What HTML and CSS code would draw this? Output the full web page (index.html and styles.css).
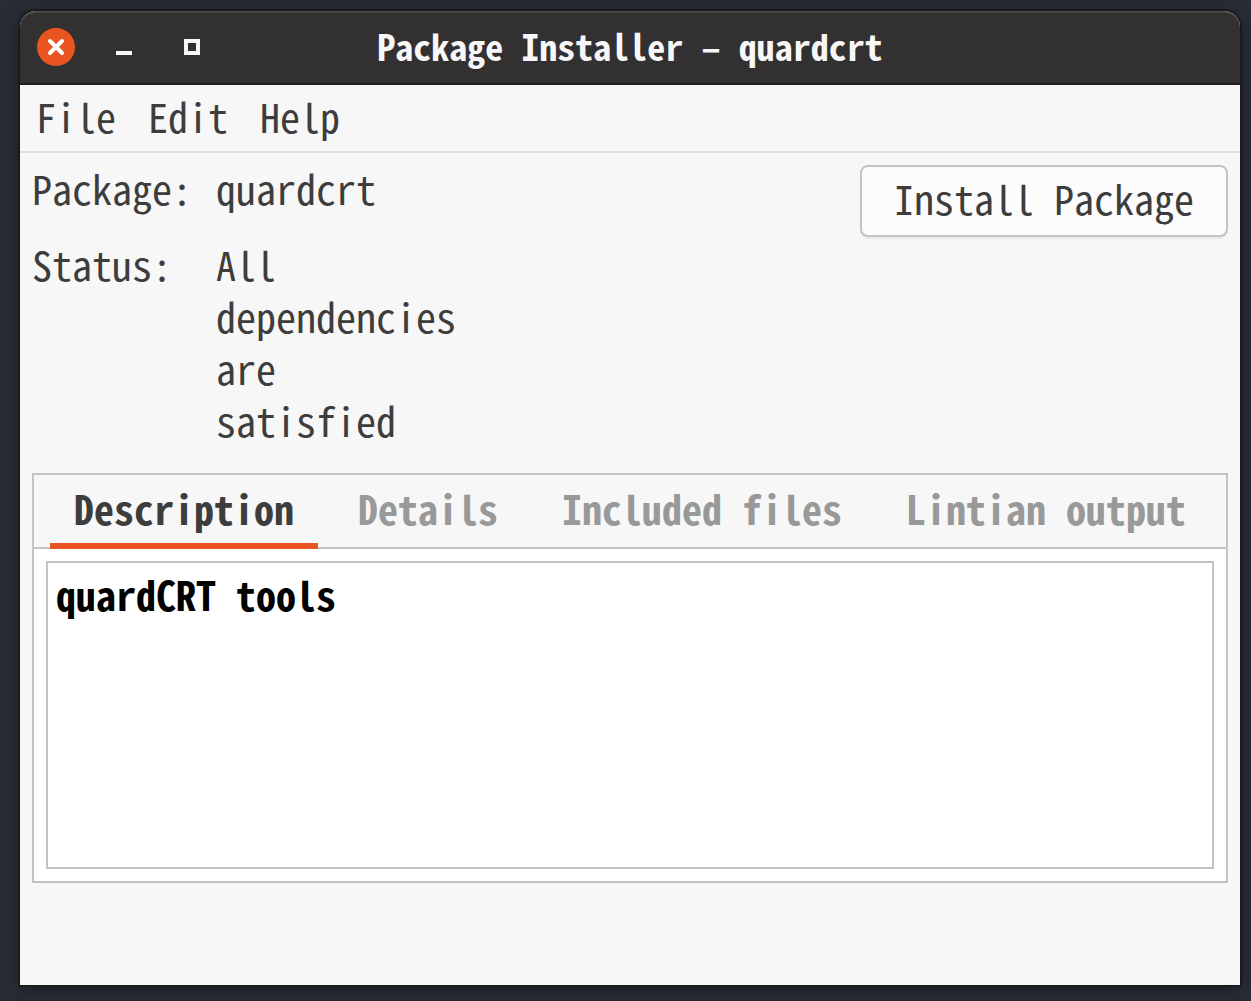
FILE: index.html
```html
<!DOCTYPE html>
<html lang="en">
<head>
<meta charset="utf-8">
<title>Package Installer – quardcrt</title>
<link rel="stylesheet" href="styles.css">
</head>
<body>
<div class="window">
  <header class="titlebar">
    <div class="controls">
      <button class="control" type="button" aria-label="Close">
        <svg viewBox="0 0 38 38" width="38" height="38"><circle cx="19" cy="19" r="19" fill="#e95420"/><path d="M13 13L25 25M25 13L13 25" stroke="#fff" stroke-width="4" stroke-linecap="round"/></svg>
      </button>
      <button class="control" type="button" aria-label="Minimize">
        <svg viewBox="0 0 38 38" width="38" height="38"><path d="M11 23h16v4H11z" fill="#f7f7f7"/></svg>
      </button>
      <button class="control" type="button" aria-label="Maximize">
        <svg viewBox="0 0 38 38" width="38" height="38"><path d="M13 13h12v12H13z" fill="none" stroke="#f7f7f7" stroke-width="4"/></svg>
      </button>
    </div>
    <h1 class="title">Package Installer – quardcrt</h1>
  </header>
  <nav class="menubar">
    <button class="menu" type="button">File</button>
    <button class="menu" type="button">Edit</button>
    <button class="menu" type="button">Help</button>
  </nav>
  <main class="content">
    <section class="summary">
      <dl class="info">
        <dt>Package:</dt>
        <dd>quardcrt</dd>
        <dt>Status:</dt>
        <dd>All dependencies are satisfied</dd>
      </dl>
      <button class="install" type="button">Install Package</button>
    </section>
    <section class="notebook">
      <div class="tabs" role="tablist">
        <button class="tab active" type="button" role="tab" aria-selected="true">Description</button>
        <button class="tab" type="button" role="tab" aria-selected="false">Details</button>
        <button class="tab" type="button" role="tab" aria-selected="false">Included files</button>
        <button class="tab" type="button" role="tab" aria-selected="false">Lintian output</button>
      </div>
      <div class="page" role="tabpanel">
        <textarea class="description" aria-label="Description" readonly>quardCRT tools</textarea>
      </div>
    </section>
  </main>
</div>
</body>
</html>
```
FILE: styles.css
```css
* {
  box-sizing: border-box;
}

body {
  margin: 0;
  min-height: 100vh;
  padding: 11px 11px 16px 20px;
  display: flex;
  background: #282c35;
  color: #3d3d3d;
  font: 40px/52px "Noto Sans Mono CJK SC", "Liberation Mono", monospace;
}

button,
textarea {
  margin: 0;
  padding: 0;
  border: 0;
  background: none;
  color: inherit;
  font: inherit;
}

.window {
  flex: 1;
  display: flex;
  flex-direction: column;
  border-radius: 16px 16px 0 0;
  background: #f7f7f7;
  box-shadow: 0 0 0 2px #1a1b1f, 0 4px 20px rgba(0, 0, 0, 0.4);
}

.titlebar {
  display: grid;
  grid-template-columns: 1fr auto 1fr;
  align-items: center;
  height: 74px;
  padding: 0 17px;
  border-top: 2px solid #484644;
  border-bottom: 2px solid #231f20;
  border-radius: 16px 16px 0 0;
  background: #333031;
  color: #f7f7f7;
}

.controls {
  display: flex;
  gap: 30px;
  padding-bottom: 2px;
}

.control,
.control svg {
  display: block;
}

.title {
  margin: 0;
  padding-bottom: 6px;
  font-size: 36px;
  font-weight: 700;
}

.menubar {
  display: flex;
  gap: 32px;
  padding: 5px 16px 9px;
  border-bottom: 2px solid #dedede;
}

.content {
  display: flex;
  flex-direction: column;
  padding: 9px 12px 12px;
}

.summary {
  display: flex;
  justify-content: space-between;
  align-items: flex-start;
}

.info {
  display: grid;
  grid-template-columns: auto 250px;
  gap: 24px;
  margin: 0 0 27px;
}

.info dd {
  margin: 0;
}

.install {
  margin-top: 3px;
  padding: 5px 32px 11px;
  border: 2px solid #c3c3c3;
  border-radius: 8px;
  background: #fcfcfc;
  box-shadow: 0 2px 2px rgba(0, 0, 0, 0.06);
}

.notebook {
  border: 2px solid #c3c3c3;
  background: #fff;
}

.tabs {
  display: flex;
  gap: 16px;
  padding: 0 16px;
  background: #f7f7f7;
  box-shadow: inset 0 -2px #c3c3c3;
}

.tab {
  padding: 7px 24px 9px;
  border-bottom: 6px solid transparent;
  color: #999;
  font-weight: 700;
}

.tab.active {
  border-bottom-color: #e95420;
  color: #3d3d3d;
}

.page {
  padding: 12px;
}

.description {
  display: block;
  width: 100%;
  height: 308px;
  padding: 5px 8px;
  border: 2px solid #c3c3c3;
  background: #fff;
  color: #000;
  font-weight: 700;
  resize: none;
  outline: 0;
}
```
